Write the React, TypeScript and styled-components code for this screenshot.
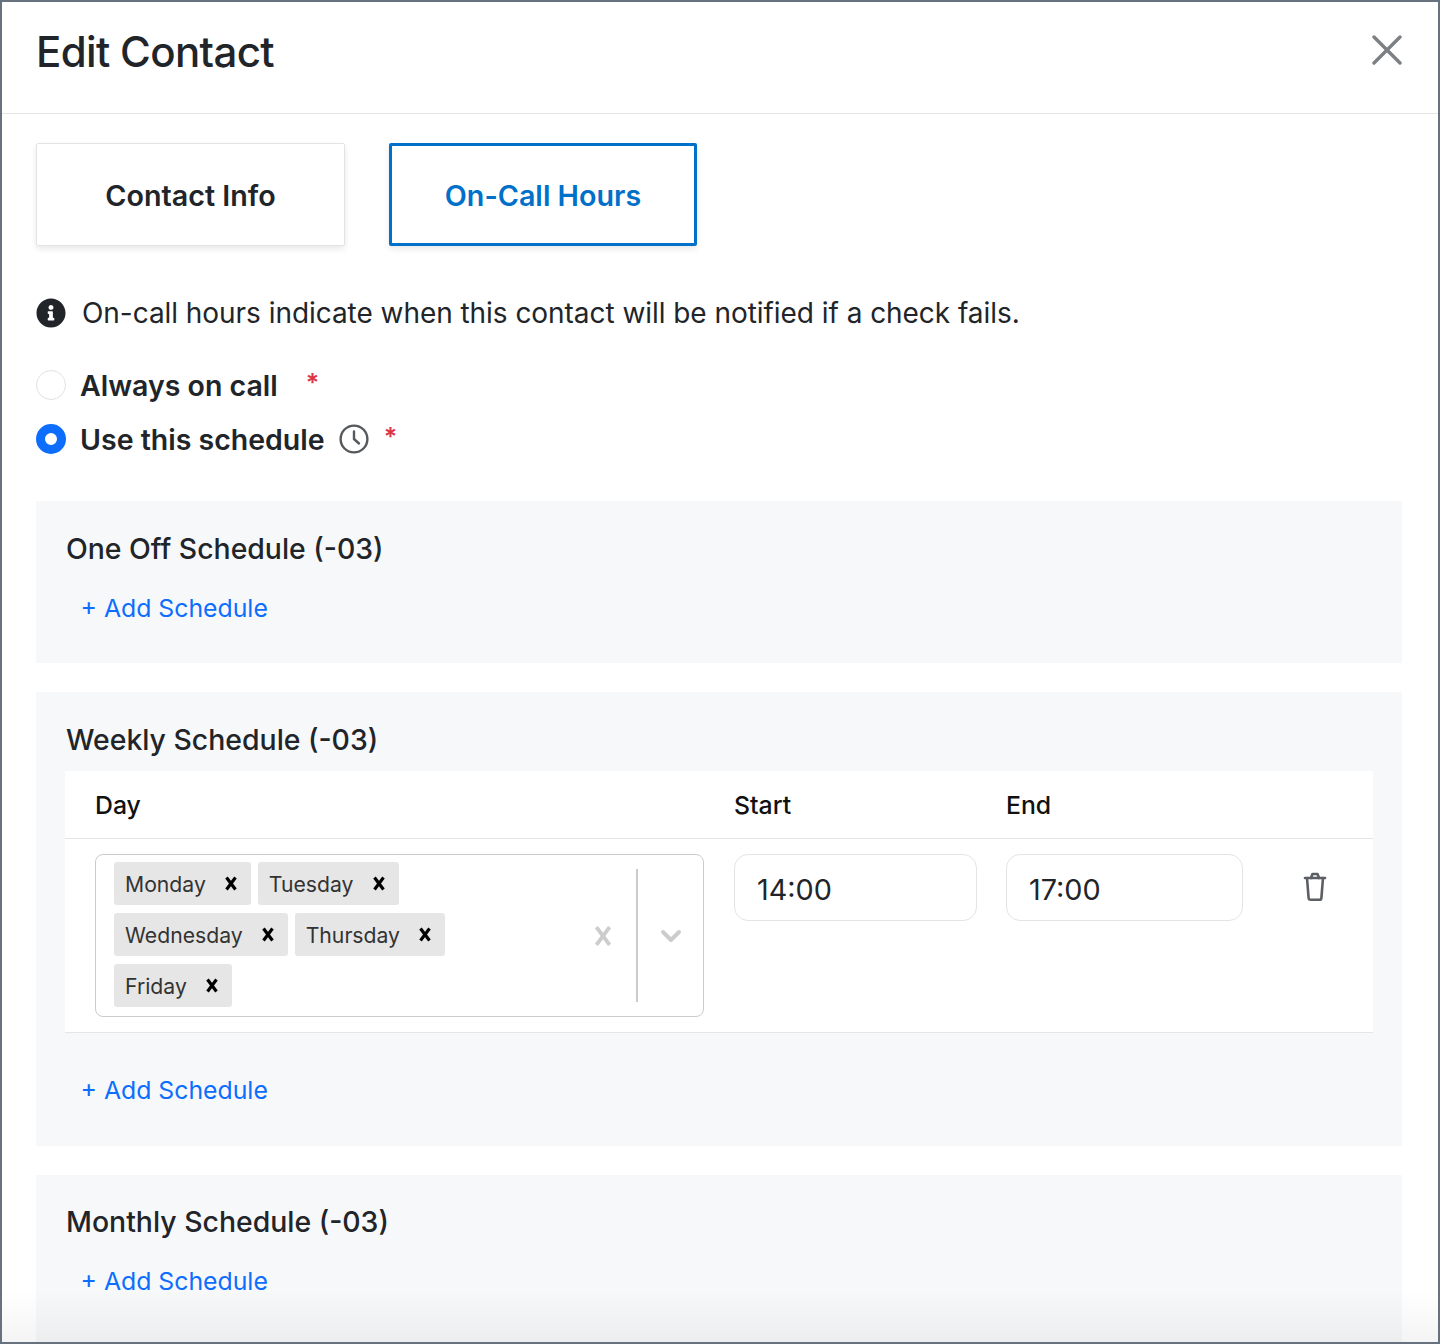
import * as React from "react";
import styled, { createGlobalStyle } from "styled-components";
import { FaInfoCircle } from "react-icons/fa";

const GlobalStyle = createGlobalStyle`
  html, body {
    margin: 0;
    padding: 0;
    background: #ffffff;
  }
  * {
    box-sizing: border-box;
  }
`;

const Frame = styled.div`
  position: relative;
  width: 1440px;
  height: 1344px;
  overflow: hidden;
  background: #ffffff;
  border: 2px solid #66727e;
  font-family: Inter, "Liberation Sans", sans-serif;
  color: #212529;
`;

const Header = styled.header`
  display: flex;
  align-items: center;
  justify-content: space-between;
  height: 112px;
  padding: 0 36px 10px 34px;
  border-bottom: 1px solid #e3e5e7;
`;

const Title = styled.h1`
  margin: 0;
  font-size: 42px;
  line-height: 1.2;
  font-weight: 500;
  letter-spacing: -0.65px;
`;

const CloseButton = styled.svg`
  display: block;
  width: 30px;
  height: 30px;
  margin-top: -5px;
  stroke: #7c7f83;
  stroke-width: 3.4;
  stroke-linecap: round;
`;

const Body = styled.div`
  padding: 29px 36px 0 34px;
`;

const Tabs = styled.div`
  display: flex;
  gap: 44px;
`;

const Tab = styled.div<{ $active?: boolean }>`
  display: flex;
  align-items: center;
  justify-content: center;
  width: ${(p) => (p.$active ? "308px" : "309px")};
  height: 103px;
  padding-top: 1px;
  font-size: 28.7px;
  font-weight: 600;
  color: ${(p) => (p.$active ? "#0070c9" : "#212529")};
  border: ${(p) => (p.$active ? "3px solid #0070c9" : "1px solid #e2e3e5")};
  border-radius: 2px;
  box-shadow: 0 3px 6px rgba(0, 0, 0, 0.09);
`;

const InfoRow = styled.div`
  display: flex;
  align-items: center;
  gap: 16px;
  height: 36px;
  margin-top: 49px;
  font-size: 28px;
  letter-spacing: -0.05px;
  color: #212529;
  white-space: nowrap;
`;

const RadioGroup = styled.div`
  display: flex;
  flex-direction: column;
  gap: 14px;
  margin-top: 34px;
`;

const RadioRow = styled.div`
  display: flex;
  align-items: center;
  height: 40px;
  font-size: 28.5px;
  font-weight: 600;
  white-space: nowrap;
`;

const Radio = styled.span<{ $checked?: boolean }>`
  flex: none;
  width: 30px;
  height: 30px;
  margin-right: 14px;
  border-radius: 50%;
  background: #ffffff;
  border: ${(p) => (p.$checked ? "9px solid #0d6efd" : "1px solid #dfe2e5")};
`;

const Asterisk = styled.span<{ $gap: number }>`
  margin-left: ${(p) => p.$gap}px;
  margin-top: -5px;
  font-size: 25px;
  font-weight: 600;
  color: #dc3545;
`;

const ClockIcon = styled.svg`
  flex: none;
  width: 30px;
  height: 30px;
  margin-left: 14px;
  fill: none;
  stroke: #55595c;
  stroke-width: 2.4;
  stroke-linecap: round;
  stroke-linejoin: round;
`;

const Panel = styled.section<{ $top: number; $height: number; $padTop?: number }>`
  height: ${(p) => p.$height}px;
  margin-top: ${(p) => p.$top}px;
  padding: ${(p) => p.$padTop ?? 29}px 29px 0 30px;
  background: #f7f8fa;
`;

const PanelTitle = styled.h2`
  margin: 0;
  height: 38px;
  font-size: 28.4px;
  line-height: 38px;
  font-weight: 500;
  color: #212529;
`;

const AddLink = styled.a`
  display: block;
  margin-top: 20px;
  padding-left: 14.5px;
  font-size: 24.8px;
  line-height: 40px;
  color: #0d6efd;
`;

const Table = styled.div`
  margin: 12px 0 37px -1px;
  background: #ffffff;
  border-bottom: 1px solid #e3e5e7;
`;

const HeadRow = styled.div`
  display: grid;
  grid-template-columns: 639px 272px 1fr;
  align-items: center;
  height: 68px;
  padding-left: 30px;
  border-bottom: 1px solid #e3e5e7;
  font-size: 24.8px;
  font-weight: 500;
  color: #111111;
`;

const BodyRow = styled.div`
  display: grid;
  grid-template-columns: 639px 272px 237px 1fr;
  align-items: start;
  padding: 15px 0 15px 30px;
`;

const SelectBox = styled.div`
  display: flex;
  width: 609px;
  height: 163px;
  padding: 7px 0 7px 18px;
  border: 1px solid #c9cbce;
  border-radius: 8px;
  background: #ffffff;
`;

const Chips = styled.div`
  flex: 1;
  display: flex;
  flex-wrap: wrap;
  align-content: flex-start;
  gap: 8px 7px;
  padding-right: 20px;
`;

const Chip = styled.span`
  display: flex;
  align-items: center;
  justify-content: space-between;
  height: 43px;
  padding: 0 14px 0 11px;
  border-radius: 3px;
  background: #e6e6e6;
  font-size: 21.2px;
  color: #333333;
`;

const ChipX = styled.svg`
  display: block;
  width: 12px;
  height: 15px;
  margin-left: 19px;
  stroke: #000000;
  stroke-width: 3.2;
`;

const ClearX = styled.svg`
  display: block;
  width: 18px;
  height: 22px;
  stroke: #cccccc;
  stroke-width: 2.6;
`;

const Indicators = styled.div`
  flex: none;
  display: flex;
  align-items: center;
  width: 117px;
`;

const ClearSlot = styled.div`
  display: flex;
  justify-content: center;
  width: 50px;
  padding-right: 16px;
`;

const Divider = styled.span`
  width: 2px;
  height: 133px;
  background: #cccccc;
`;

const ChevronSlot = styled.div`
  display: flex;
  justify-content: center;
  flex: 1;
`;

const Chevron = styled.svg`
  display: block;
  width: 22px;
  height: 14px;
  fill: none;
  stroke: #cccccc;
  stroke-width: 4;
  stroke-linecap: round;
  stroke-linejoin: round;
`;

const TimeInput = styled.div<{ $width: number }>`
  display: flex;
  align-items: center;
  width: ${(p) => p.$width}px;
  height: 67px;
  padding: 3px 0 0 22px;
  border: 1px solid #e2e4e6;
  border-radius: 14px;
  font-size: 28.8px;
  color: #212529;
`;

const DeleteCell = styled.div`
  display: flex;
  justify-content: center;
  width: 144px;
  padding-top: 18px;
`;

const TrashIcon = styled.svg`
  display: block;
  width: 24px;
  height: 30px;
  fill: none;
  stroke: #5c5f63;
  stroke-width: 2.6;
  stroke-linecap: round;
  stroke-linejoin: round;
`;

const BottomFade = styled.div`
  position: absolute;
  left: 0;
  right: 0;
  bottom: 0;
  height: 52px;
  background: linear-gradient(rgba(0, 0, 0, 0), rgba(0, 0, 0, 0.045));
  pointer-events: none;
`;

const days = ["Monday", "Tuesday", "Wednesday", "Thursday", "Friday"];

const Cross: React.FunctionComponent = () => (
  <>
    <line x1="1.5" y1="1.5" x2="10.5" y2="13.5" />
    <line x1="10.5" y1="1.5" x2="1.5" y2="13.5" />
  </>
);

const App: React.FunctionComponent = () => {
  return (
    <>
      <GlobalStyle />
      <Frame>
        <Header>
          <Title>Edit Contact</Title>
          <CloseButton viewBox="0 0 30 30">
            <line x1="2" y1="2" x2="28" y2="28" />
            <line x1="28" y1="2" x2="2" y2="28" />
          </CloseButton>
        </Header>
        <Body>
          <Tabs>
            <Tab>Contact Info</Tab>
            <Tab $active>On-Call Hours</Tab>
          </Tabs>
          <InfoRow>
            <FaInfoCircle size={30} color="#212529" />
            On-call hours indicate when this contact will be notified if a check fails.
          </InfoRow>
          <RadioGroup>
            <RadioRow>
              <Radio />
              Always on call
              <Asterisk $gap={28}>*</Asterisk>
            </RadioRow>
            <RadioRow>
              <Radio $checked />
              Use this schedule
              <ClockIcon viewBox="0 0 30 30">
                <circle cx="15" cy="15" r="13.4" />
                <path d="M15 7.5V15l5 4.5" />
              </ClockIcon>
              <Asterisk $gap={15}>*</Asterisk>
            </RadioRow>
          </RadioGroup>
          <Panel $top={42} $height={162}>
            <PanelTitle>One Off Schedule (-03)</PanelTitle>
            <AddLink>+ Add Schedule</AddLink>
          </Panel>
          <Panel $top={29} $height={454}>
            <PanelTitle>Weekly Schedule (-03)</PanelTitle>
            <Table>
              <HeadRow>
                <span>Day</span>
                <span>Start</span>
                <span>End</span>
              </HeadRow>
              <BodyRow>
                <SelectBox>
                  <Chips>
                    {days.map((day) => (
                      <Chip key={day}>
                        {day}
                        <ChipX viewBox="0 0 12 15">
                          <Cross />
                        </ChipX>
                      </Chip>
                    ))}
                  </Chips>
                  <Indicators>
                    <ClearSlot>
                      <ClearX viewBox="0 0 12 15">
                        <Cross />
                      </ClearX>
                    </ClearSlot>
                    <Divider />
                    <ChevronSlot>
                      <Chevron viewBox="0 0 22 14">
                        <path d="M3 3l8 8 8-8" />
                      </Chevron>
                    </ChevronSlot>
                  </Indicators>
                </SelectBox>
                <TimeInput $width={243}>14:00</TimeInput>
                <TimeInput $width={237}>17:00</TimeInput>
                <DeleteCell>
                  <TrashIcon viewBox="0 0 24 30">
                    <path d="M2 6h20" />
                    <path d="M8 6l1.5-4h5L16 6" />
                    <path d="M4 6l1.6 20a2 2 0 0 0 2 1.8h8.8a2 2 0 0 0 2-1.8L20 6" />
                  </TrashIcon>
                </DeleteCell>
              </BodyRow>
            </Table>
            <AddLink>+ Add Schedule</AddLink>
          </Panel>
          <Panel $top={29} $height={170} $padTop={28}>
            <PanelTitle>Monthly Schedule (-03)</PanelTitle>
            <AddLink>+ Add Schedule</AddLink>
          </Panel>
        </Body>
        <BottomFade />
      </Frame>
    </>
  );
};

export default App;
